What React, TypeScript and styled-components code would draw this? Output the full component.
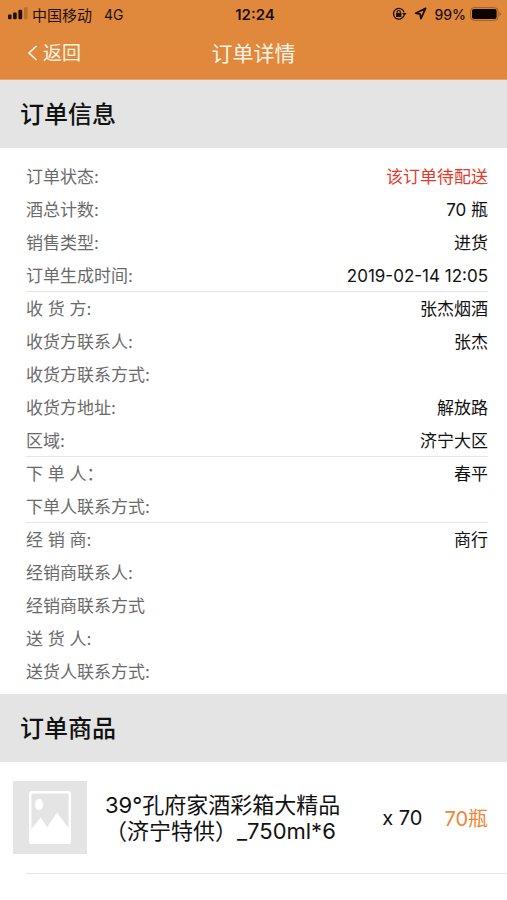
import React from "react";
import styled, { createGlobalStyle, css } from "styled-components";

const Global = createGlobalStyle`
  * { box-sizing: border-box; }
  body {
    margin: 0;
    background: #fff;
    color: #111;
    font-family: Inter, "Noto Sans CJK SC", sans-serif;
  }
`;

const TopBar = styled.header`
  background: #e0893d;
`;

const StatusBar = styled.div`
  display: grid;
  grid-template-columns: 1fr auto 1fr;
  align-items: center;
  height: 28px;
  padding: 0 5px 0 8px;
  font-size: 14px;
  color: #1d1005;
`;

const Carrier = styled.div`
  display: flex;
  align-items: center;
  gap: 4px;
`;

const CarrierName = styled.span`
  font-size: 15px;
  margin-right: 8px;
`;

const Clock = styled.time`
  font-size: 15px;
  font-weight: 600;
`;

const Indicators = styled.div`
  display: flex;
  align-items: center;
  justify-content: flex-end;
  gap: 7px;
`;

const Battery = styled.span`
  display: flex;
  align-items: center;
  gap: 4px;
  font-weight: 500;
`;

const NavBar = styled.nav`
  display: grid;
  grid-template-columns: 1fr auto 1fr;
  align-items: center;
  height: 52px;
  padding: 0 26px;
  border-bottom: 1px solid #e5a56c;
  color: #fff3e6;
`;

const BackButton = styled.button`
  display: flex;
  align-items: center;
  justify-self: start;
  gap: 5px;
  padding: 0;
  border: 0;
  background: none;
  color: inherit;
  font: inherit;
  font-size: 19px;
  line-height: 28px;
  cursor: pointer;
`;

const PageTitle = styled.h1`
  margin: 0;
  font-size: 21px;
  font-weight: 400;
  line-height: 26px;
`;

const SectionTitle = styled.h2`
  margin: 0;
  padding: 17px 20px 15px;
  background: #e4e4e4;
  font-size: 24px;
  font-weight: 500;
  line-height: 36px;
  color: #111;
`;

const InfoList = styled.dl`
  margin: 0;
  padding: 12px 19px 6px 26px;
`;

const InfoRow = styled.div<{ $divided?: boolean }>`
  display: flex;
  justify-content: space-between;
  height: 33px;
  font-size: 17px;
  line-height: 34px;
  ${(p) =>
    p.$divided &&
    css`
      border-bottom: 1px solid #e6e6e6;
    `}
`;

const Label = styled.dt`
  color: #6a6a6a;
`;

const Value = styled.dd<{ $alert?: boolean }>`
  margin: 0;
  color: ${(p) => (p.$alert ? "#e4392b" : "#111")};
`;

const Products = styled.ul`
  margin: 0;
  padding: 0;
  list-style: none;
`;

const Product = styled.div`
  display: flex;
  align-items: center;
  padding: 19px 19px 19px 13px;
`;

const Divider = styled.hr`
  height: 1px;
  margin: 0 0 0 26px;
  border: 0;
  background: #e6e6e6;
`;

const Thumb = styled.div`
  display: grid;
  place-items: center;
  flex: none;
  width: 74px;
  height: 73px;
  background: #e4e4e4;
`;

const ProductName = styled.p`
  flex: 1;
  margin: 0 0 0 18px;
  font-size: 22px;
  line-height: 26px;
`;

const NameLine = styled.span`
  display: block;
  white-space: nowrap;
`;

const Quantity = styled.span`
  font-size: 20px;
`;

const Total = styled.span`
  margin-left: 22px;
  font-size: 20px;
  color: #ee8533;
`;

type Info = { label: string; value?: string; alert?: boolean; divided?: boolean };

const info: Info[] = [
  { label: "订单状态:", value: "该订单待配送", alert: true },
  { label: "酒总计数:", value: "70 瓶" },
  { label: "销售类型:", value: "进货" },
  { label: "订单生成时间:", value: "2019-02-14 12:05", divided: true },
  { label: "收 货 方:", value: "张杰烟酒" },
  { label: "收货方联系人:", value: "张杰" },
  { label: "收货方联系方式:" },
  { label: "收货方地址:", value: "解放路" },
  { label: "区域:", value: "济宁大区", divided: true },
  { label: "下 单 人：", value: "春平" },
  { label: "下单人联系方式:", divided: true },
  { label: "经 销 商:", value: "商行" },
  { label: "经销商联系人:" },
  { label: "经销商联系方式" },
  { label: "送 货 人:" },
  { label: "送货人联系方式:" },
];

const SignalIcon = () => (
  <svg width="20" height="14" viewBox="0 0 20 14" aria-hidden="true">
    <rect x="0" y="7.4" width="3.6" height="4.8" rx="1" fill="#1d1005" />
    <rect x="5.1" y="5.6" width="3.6" height="6.6" rx="1" fill="#1d1005" />
    <rect x="10.4" y="2.8" width="3.8" height="9.4" rx="1" fill="#1d1005" />
    <rect x="16" y="0.2" width="3.6" height="12" rx="1" fill="#bd6c33" />
  </svg>
);

const RotationLockIcon = () => (
  <svg width="15" height="14" viewBox="0 0 15 14" fill="none" aria-hidden="true">
    <path d="M11.9 8.8A5.4 5.4 0 1 1 12.1 5.4" stroke="#1d1005" strokeWidth="1.3" />
    <path d="M10 6h4.6l-2.3 3z" fill="#1d1005" />
    <rect x="4" y="6" width="5.4" height="4" rx="0.6" fill="#1d1005" />
    <path d="M5.1 6.3V5.1a1.6 1.6 0 0 1 3.2 0v1.2" stroke="#1d1005" strokeWidth="1.2" />
  </svg>
);

const LocationIcon = () => (
  <svg width="13" height="14" viewBox="0 0 13 14" fill="none" aria-hidden="true">
    <path
      d="M11.6 1.4 1.6 6.2l4.5.9.8 4.6z"
      stroke="#1d1005"
      strokeWidth="1.8"
      strokeLinejoin="round"
    />
  </svg>
);

const BatteryIcon = () => (
  <svg width="32" height="14" viewBox="0 0 32 14" fill="none" aria-hidden="true">
    <rect x="0.6" y="0.7" width="27.4" height="12.6" rx="3.4" stroke="#9b5c27" />
    <rect x="2" y="2" width="24.6" height="10" rx="2" fill="#0a0502" />
    <path d="M29.4 4.8c1.8.7 1.8 3.7 0 4.4z" fill="#9b5c27" />
  </svg>
);

const BackIcon = () => (
  <svg width="12" height="18" viewBox="0 0 12 18" fill="none" aria-hidden="true">
    <path d="M10.5 1 3 8l7.5 7" stroke="currentColor" strokeWidth="1.7" />
  </svg>
);

const PlaceholderIcon = () => (
  <svg width="42" height="53" viewBox="0 0 42 53" role="img" aria-label="商品图片">
    <rect x="1.2" y="1.2" width="39.6" height="50.6" rx="1.6" fill="none" stroke="#fff" strokeWidth="2.4" />
    <ellipse cx="10" cy="13.5" rx="4" ry="5.8" fill="#fff" />
    <path d="M1 40 11.7 26.3l6.3 10L28 21.7 41 39v13H1z" fill="#fff" />
  </svg>
);

export default function App() {
  return (
    <>
      <Global />
      <TopBar>
        <StatusBar>
          <Carrier>
            <SignalIcon />
            <CarrierName>中国移动</CarrierName>
            <span>4G</span>
          </Carrier>
          <Clock>12:24</Clock>
          <Indicators>
            <RotationLockIcon />
            <LocationIcon />
            <Battery>
              <span>99%</span>
              <BatteryIcon />
            </Battery>
          </Indicators>
        </StatusBar>
        <NavBar>
          <BackButton type="button">
            <BackIcon />
            返回
          </BackButton>
          <PageTitle>订单详情</PageTitle>
        </NavBar>
      </TopBar>
      <main>
        <section>
          <SectionTitle>订单信息</SectionTitle>
          <InfoList>
            {info.map((row) => (
              <InfoRow key={row.label} $divided={row.divided}>
                <Label>{row.label}</Label>
                <Value $alert={row.alert}>{row.value}</Value>
              </InfoRow>
            ))}
          </InfoList>
        </section>
        <section>
          <SectionTitle>订单商品</SectionTitle>
          <Products>
            <li>
              <Product>
                <Thumb>
                  <PlaceholderIcon />
                </Thumb>
                <ProductName>
                  <NameLine>39°孔府家酒彩箱大精品</NameLine>
                  <NameLine>（济宁特供）_750ml*6</NameLine>
                </ProductName>
                <Quantity>x 70</Quantity>
                <Total>70瓶</Total>
              </Product>
              <Divider />
            </li>
          </Products>
        </section>
      </main>
    </>
  );
}
